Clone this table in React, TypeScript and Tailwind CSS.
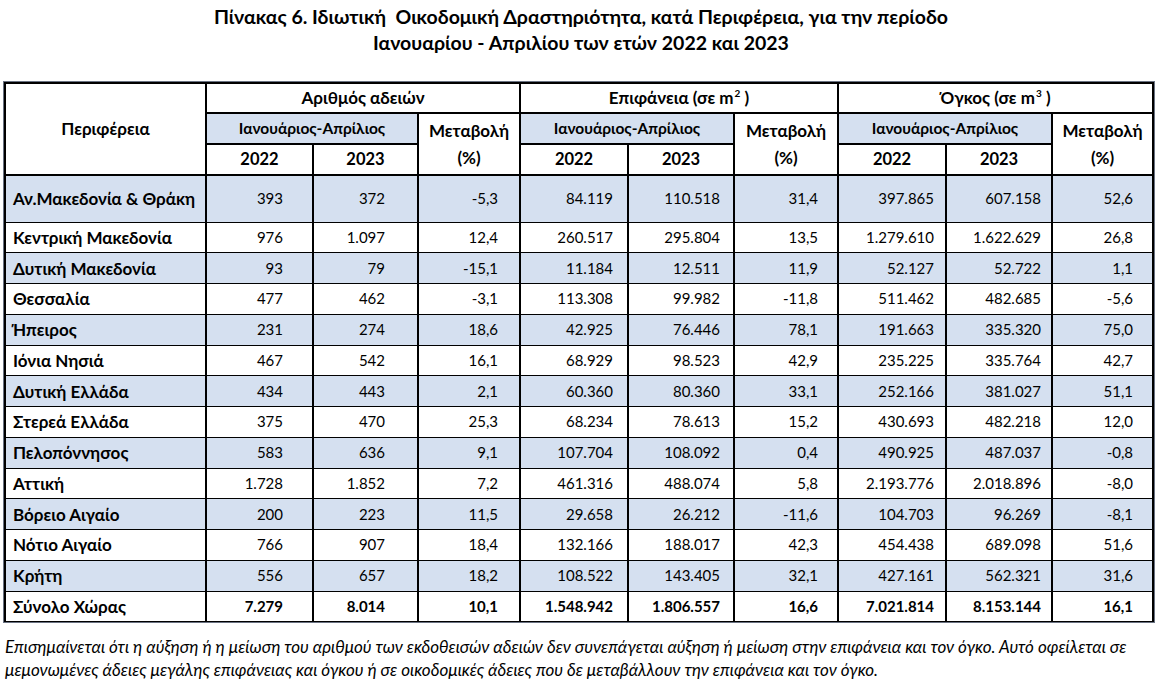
import React from "react";

const rows: string[][] = [
  ["Αν.Μακεδονία & Θράκη", "393", "372", "-5,3", "84.119", "110.518", "31,4", "397.865", "607.158", "52,6"],
  ["Κεντρική Μακεδονία", "976", "1.097", "12,4", "260.517", "295.804", "13,5", "1.279.610", "1.622.629", "26,8"],
  ["Δυτική Μακεδονία", "93", "79", "-15,1", "11.184", "12.511", "11,9", "52.127", "52.722", "1,1"],
  ["Θεσσαλία", "477", "462", "-3,1", "113.308", "99.982", "-11,8", "511.462", "482.685", "-5,6"],
  ["Ήπειρος", "231", "274", "18,6", "42.925", "76.446", "78,1", "191.663", "335.320", "75,0"],
  ["Ιόνια Νησιά", "467", "542", "16,1", "68.929", "98.523", "42,9", "235.225", "335.764", "42,7"],
  ["Δυτική Ελλάδα", "434", "443", "2,1", "60.360", "80.360", "33,1", "252.166", "381.027", "51,1"],
  ["Στερεά Ελλάδα", "375", "470", "25,3", "68.234", "78.613", "15,2", "430.693", "482.218", "12,0"],
  ["Πελοπόννησος", "583", "636", "9,1", "107.704", "108.092", "0,4", "490.925", "487.037", "-0,8"],
  ["Αττική", "1.728", "1.852", "7,2", "461.316", "488.074", "5,8", "2.193.776", "2.018.896", "-8,0"],
  ["Βόρειο Αιγαίο", "200", "223", "11,5", "29.658", "26.212", "-11,6", "104.703", "96.269", "-8,1"],
  ["Νότιο Αιγαίο", "766", "907", "18,4", "132.166", "188.017", "42,3", "454.438", "689.098", "51,6"],
  ["Κρήτη", "556", "657", "18,2", "108.522", "143.405", "32,1", "427.161", "562.321", "31,6"],
  ["Σύνολο Χώρας", "7.279", "8.014", "10,1", "1.548.942", "1.806.557", "16,6", "7.021.814", "8.153.144", "16,1"],
];

const padR = [
  "pl-[7px]",
  "pr-[29px]",
  "pr-[32px]",
  "pr-[21px]",
  "pr-[14px]",
  "pr-[13px]",
  "pr-[19px]",
  "pr-[11px]",
  "pr-[10px]",
  "pr-[19px]",
];

const BLUE = "bg-[#d5e0f0]";
const TH = "border-2 border-black font-bold text-[17px]";
const THI = `border-2 border-black font-bold text-[15.5px] ${BLUE}`;
const THY = "border-2 border-black font-bold text-[16.5px]";
const THM = "border-2 border-black font-bold text-[17px] leading-[27px]";

export default function App() {
  return (
    <div
      className="w-[1162px] h-[690px] bg-white text-black overflow-hidden"
      style={{ fontFamily: "Lato, 'Open Sans', 'Noto Sans', sans-serif" }}
    >
      <div className="pt-[4px] text-center font-bold text-[19.5px] leading-[26px]">
        <div>Πίνακας 6. Ιδιωτική&nbsp; Οικοδομική Δραστηριότητα, κατά Περιφέρεια, για την περίοδο</div>
        <div>Ιανουαρίου - Απριλίου των ετών 2022 και 2023</div>
      </div>

      <div className="mt-[25px] ml-[3px] w-[1152px] border border-gray-500 p-0">
        <table className="table-fixed border-collapse w-full text-[15px]">
          <colgroup>
            <col className="w-[201px]" />
            <col className="w-[107px]" />
            <col className="w-[105px]" />
            <col className="w-[102px]" />
            <col className="w-[108px]" />
            <col className="w-[106px]" />
            <col className="w-[104px]" />
            <col className="w-[108px]" />
            <col className="w-[106px]" />
            <col className="w-[101px]" />
          </colgroup>
          <thead className="font-bold">
            <tr className="h-[30px]">
              <th rowSpan={3} className={`${TH} text-center align-middle`}>
                Περιφέρεια
              </th>
              <th colSpan={3} className={TH}>
                Αριθμός αδειών
              </th>
              <th colSpan={3} className={TH}>
                Επιφάνεια (σε m<sup className="text-[10px] relative -top-[7px] ml-[1px]">2</sup> )
              </th>
              <th colSpan={3} className={TH}>
                Όγκος (σε m<sup className="text-[10px] relative -top-[7px] ml-[1px]">3</sup> )
              </th>
            </tr>
            <tr className="h-[31px]">
              <th colSpan={2} className={THI}>Ιανουάριος-Απρίλιος</th>
              <th rowSpan={2} className={THM}>
                Μεταβολή<br />(%)
              </th>
              <th colSpan={2} className={THI}>Ιανουάριος-Απρίλιος</th>
              <th rowSpan={2} className={THM}>
                Μεταβολή<br />(%)
              </th>
              <th colSpan={2} className={THI}>Ιανουάριος-Απρίλιος</th>
              <th rowSpan={2} className={THM}>
                Μεταβολή<br />(%)
              </th>
            </tr>
            <tr className="h-[31px]">
              <th className={THY}>2022</th>
              <th className={THY}>2023</th>
              <th className={THY}>2022</th>
              <th className={THY}>2023</th>
              <th className={THY}>2022</th>
              <th className={THY}>2023</th>
            </tr>
          </thead>
          <tbody>
            {rows.map((r, i) => {
              const isTotal = i === rows.length - 1;
              const bg = i % 2 === 0 ? BLUE : "bg-white";
              return (
                <tr key={i} className={`${i === 0 ? "h-[47px]" : "h-[30.75px]"} ${bg}`}>
                  {r.map((c, j) => (
                    <td
                      key={j}
                      className={`border-x-2 border-y border-black align-middle whitespace-nowrap leading-none ${
                        j === 0 ? "text-left font-bold text-[17px] " + padR[0] : "text-right " + padR[j]
                      } ${isTotal ? "font-bold" : ""} ${i === 0 ? "border-t-2" : ""}`}
                    >
                      {c}
                    </td>
                  ))}
                </tr>
              );
            })}
          </tbody>
        </table>
      </div>

      <div className="mt-[12px] pl-[5px] italic text-[17px] leading-[23px] whitespace-nowrap">
        <div>
          Επισημαίνεται ότι η αύξηση ή η μείωση του αριθμού των εκδοθεισών αδειών δεν συνεπάγεται αύξηση ή μείωση στην επιφάνεια και τον όγκο. Αυτό οφείλεται σε
        </div>
        <div>μεμονωμένες άδειες μεγάλης επιφάνειας και όγκου ή σε οικοδομικές άδειες που δε μεταβάλλουν την επιφάνεια και τον όγκο.</div>
      </div>
    </div>
  );
}
